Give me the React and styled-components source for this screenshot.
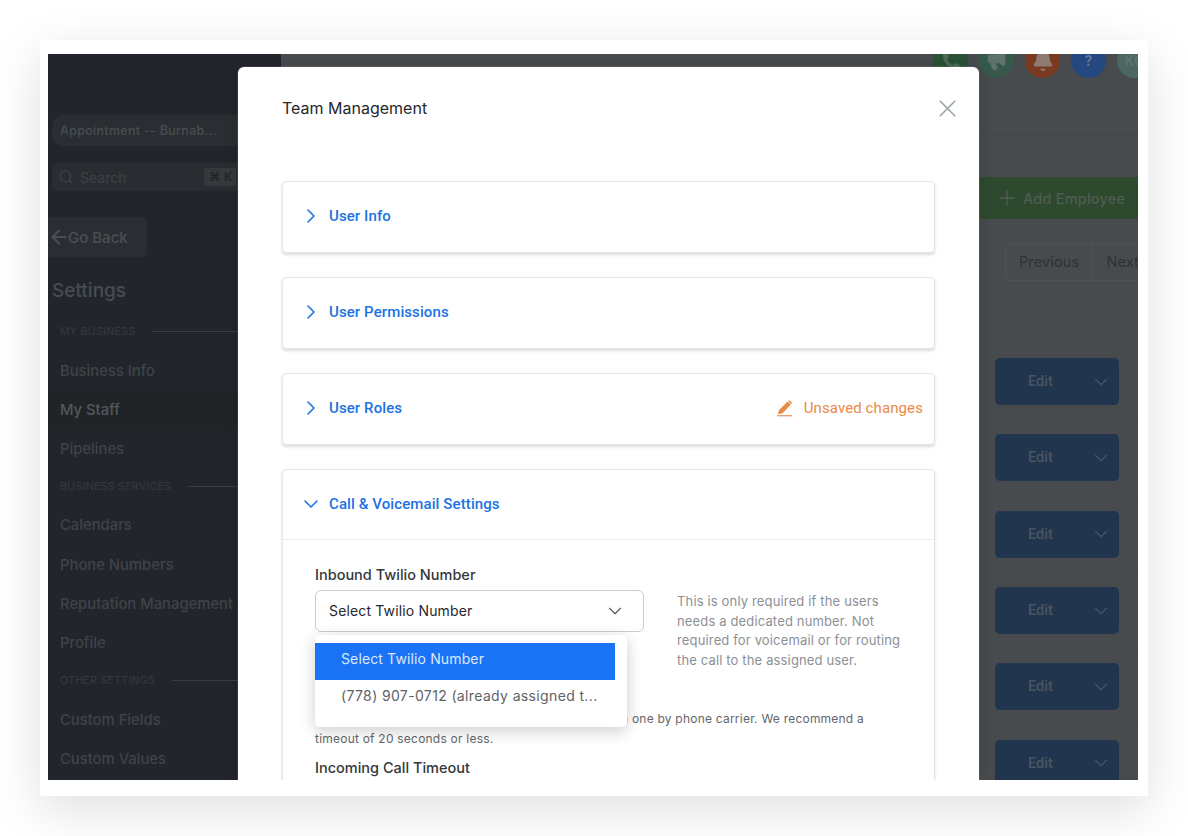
import React from "react";
import styled, { createGlobalStyle } from "styled-components";
import { ChevronRight, ChevronDown, X, Plus, Phone, Megaphone, Bell, Search, ArrowLeft } from "lucide-react";

const Global = createGlobalStyle`
  html, body { margin: 0; padding: 0; background: #fff; }
  body { font-family: Inter, "Liberation Sans", sans-serif; width: 1188px; height: 836px; overflow: hidden; }
  * { box-sizing: border-box; }
`;

const Page = styled.div`
  width: 1188px;
  height: 836px;
  padding: 40px;
`;
const Frame = styled.div`
  width: 1108px;
  height: 756px;
  background: #fff;
  padding: 14px 10px 16px 8px;
  box-shadow: 0 14px 48px rgba(0, 0, 0, 0.13);
`;
const Screen = styled.div`
  position: relative;
  display: flex;
  width: 1090px;
  height: 726px;
  overflow: hidden;
  background: #474b4d;
`;
const Sidebar = styled.aside`
  width: 233px;
  flex: none;
  background: #22262c;
  padding-top: 61px;
  display: flex;
  flex-direction: column;
  color: #43474c;
`;
const Location = styled.div`
  margin-left: 4px;
  height: 31px;
  border-radius: 12px;
  background: #2a2e33;
  padding-left: 8px;
  font-size: 12.5px;
  letter-spacing: 0.3px;
  font-weight: 500;
  line-height: 32px;
  white-space: nowrap;
  color: #494d52;
`;
const SearchBox = styled.div`
  margin: 17px 0 0 4px;
  height: 28px;
  border-radius: 5px;
  background: #292d32;
  display: flex;
  align-items: center;
  padding-left: 6px;
  font-size: 14px;
  color: #3d4146;
  gap: 6px;
`;
const Kbd = styled.span`
  margin-left: 72px;
  width: 32px;
  height: 18px;
  background: #35393d;
  border-radius: 2px;
  font-size: 12px;
  line-height: 18px;
  text-align: center;
  color: #1c1f23;
`;
const BackButton = styled.div`
  margin-top: 26px;
  width: 99px;
  height: 40px;
  border-radius: 0 6px 6px 0;
  background: #2a2e33;
  display: flex;
  align-items: center;
  font-size: 15px;
  font-weight: 500;
  color: #4a4e53;
  svg { margin-right: -2px; }
`;
const SideTitle = styled.div`
  margin: 21px 0 0 4px;
  height: 26px;
  font-size: 19px;
  line-height: 26px;
  font-weight: 500;
  color: #484c51;
`;
const Section = styled.div`
  display: flex;
  align-items: center;
  gap: 17px;
  height: 20px;
  padding-left: 12px;
  font-size: 10.5px;
  letter-spacing: 0.35px;
  color: #353a3f;
  white-space: nowrap;
  margin-top: ${(p) => p.$mt}px;
  &::after { content: ""; flex: 1; height: 1px; background: #3a3e44; }
`;
const NavItem = styled.div`
  height: 39.3px;
  line-height: 39.3px;
  padding-left: 12px;
  font-size: 14.8px;
  font-weight: 500;
  white-space: nowrap;
  margin-top: ${(p) => p.$mt || 0}px;
  color: ${(p) => (p.$active ? "#54585b" : "#3f4348")};
  background: ${(p) => (p.$active ? "#202427" : "transparent")};
`;
const Main = styled.main`
  flex: 1;
  min-width: 0;
  display: flex;
  flex-direction: column;
`;
const TopBar = styled.div`
  height: 82px;
  flex: none;
  border-bottom: 1px solid #434749;
  display: flex;
  justify-content: flex-end;
  gap: 11px;
  margin-right: -14px;
`;
const Avatar = styled.div`
  width: 35px;
  height: 35px;
  margin-top: -11px;
  border-radius: 50%;
  flex: none;
  background: ${(p) => p.$bg};
  color: ${(p) => p.$fg};
  display: flex;
  align-items: center;
  justify-content: center;
  font-size: 14px;
  font-weight: ${(p) => p.$weight || 700};
  overflow: hidden;
`;
const AddButton = styled.div`
  align-self: flex-end;
  margin-top: 41px;
  width: 300px;
  height: 42px;
  flex: none;
  background: #2d4a2f;
  color: #4f5c52;
  display: flex;
  align-items: center;
  padding-left: 157px;
  gap: 4px;
  font-size: 14.5px;
  font-weight: 500;
  letter-spacing: 0.2px;
  white-space: nowrap;
`;
const Pager = styled.div`
  align-self: flex-end;
  margin: 24px -15px 0 0;
  height: 38px;
  display: flex;
  border: 1px solid #4e5254;
  border-radius: 4px;
  font-size: 14.5px;
  color: #2f3234;
`;
const PagerItem = styled.div`
  padding: 0 13px;
  line-height: 36px;
  letter-spacing: 0.15px;
  & + & { border-left: 1px solid #4e5254; }
`;
const Rows = styled.div`
  margin-top: 63px;
`;
const Row = styled.div`
  height: 76.33px;
  border-bottom: 1px solid #44484a;
  display: flex;
  align-items: center;
  justify-content: flex-end;
  padding-right: 19px;
`;
const EditButton = styled.div`
  width: 124px;
  height: 47px;
  border-radius: 5px;
  background: #22354f;
  color: #4a5562;
  display: flex;
  align-items: center;
  padding-left: 33px;
  font-family: Roboto, sans-serif;
  font-size: 14.5px;
  font-weight: 500;
  svg { margin-left: auto; margin-right: 7px; }
`;
const Modal = styled.section`
  position: absolute;
  left: 190px;
  top: 13px;
  bottom: 0;
  width: 741px;
  background: #fff;
  border-radius: 6px 6px 0 0;
  box-shadow: 0 0 0 1px rgba(255, 255, 255, 0.1), 0 0 14px rgba(0, 0, 0, 0.14);
  padding: 0 44px;
  overflow: hidden;
`;
const ModalHead = styled.header`
  height: 114px;
  display: flex;
  justify-content: space-between;
  padding-top: 30px;
`;
const ModalTitle = styled.h2`
  margin: 0;
  height: 22px;
  font-size: 16px;
  line-height: 22px;
  font-weight: 400;
  color: #26282b;
`;
const CloseButton = styled.div`
  margin-right: -27px;
  color: #9ba3a8;
  height: 22px;
  display: flex;
  align-items: center;
`;
const Card = styled.div`
  width: 653px;
  border: 1px solid #e4e5e7;
  border-radius: 4px;
  background: #fff;
  box-shadow: 0 2px 3px rgba(0, 0, 0, 0.14);
  margin-bottom: 24px;
`;
const CardHeader = styled.div`
  height: 70px;
  display: flex;
  align-items: center;
  padding: 0 11px 2px 16px;
  color: #1b73e2;
  gap: 6px;
  border-bottom: ${(p) => (p.$open ? "1px solid #eeeff1" : "none")};
`;
const CardTitle = styled.div`
  font-family: Roboto, sans-serif;
  font-size: 15px;
  letter-spacing: 0.1px;
  font-weight: 500;
  flex: 1;
`;
const Unsaved = styled.div`
  display: flex;
  align-items: center;
  gap: 11px;
  font-family: Roboto, sans-serif;
  font-size: 15px;
  letter-spacing: 0.1px;
  color: #ea8a47;
`;
const CardBody = styled.div`
  padding: 25px 32px 60px 32px;
  position: relative;
`;
const FieldRow = styled.div`
  display: flex;
  gap: 33px;
`;
const FieldLabel = styled.div`
  font-size: 14.5px;
  line-height: 20px;
  font-weight: 500;
  color: #33373b;
`;
const SelectBox = styled.div`
  margin-top: 5px;
  width: 329px;
  height: 42px;
  border: 1px solid #c9ccd2;
  border-radius: 6px;
  display: flex;
  align-items: center;
  justify-content: space-between;
  padding: 0 17px 0 13px;
  font-size: 14px;
  line-height: 38px;
  letter-spacing: 0.15px;
  color: #25282c;
  svg { color: #55595e; }
`;
const Help = styled.p`
  margin: 27px 0 0;
  width: 232px;
  font-size: 13px;
  line-height: 19.6px;
  letter-spacing: 0.15px;
  color: #8c9096;
`;
const Dropdown = styled.div`
  position: absolute;
  left: 32px;
  top: 95px;
  width: 312px;
  height: 92px;
  background: #fff;
  border-radius: 5px;
  padding-top: 8px;
  box-shadow: 0 4px 16px rgba(0, 0, 0, 0.2);
  z-index: 2;
`;
const Option = styled.div`
  width: 300px;
  height: 37px;
  line-height: 32px;
  padding-left: 26px;
  font-size: 14px;
  white-space: nowrap;
  letter-spacing: 0.13px;
  background: ${(p) => (p.$selected ? "#1a73f5" : "transparent")};
  color: ${(p) => (p.$selected ? "#dbe9fd" : "#5f6368")};
  &:last-child { line-height: 31px; letter-spacing: 0.36px; }
`;
const Note = styled.p`
  margin: 39px 0 0;
  font-size: 12px;
  line-height: 20px;
  color: #63676c;
  letter-spacing: 0.22px;
`;
const NoteLine = styled.span`
  display: block;
  width: 549px;
  text-align: right;
  white-space: nowrap;
`;
const TimeoutLabel = styled(FieldLabel)`
  margin-top: 9px;
`;

const Pencil = () => (
  <svg width="17" height="17" viewBox="0 0 17 17" fill="#ea8a47" aria-hidden="true">
    <path d="M11.6 1.6 14.9 4.6 6.6 13.3 2 14.3 3.1 9.9Z" />
    <path d="M12.5.8c.5-.5 1.2-.5 1.7 0l1.3 1.2c.5.5.5 1.2 0 1.7l-.3.3L12.2 1Z" />
    <rect x="1" y="15.2" width="15" height="1.1" />
  </svg>
);

const section1 = ["Business Info", "My Staff", "Pipelines"];
const section2 = ["Calendars", "Phone Numbers", "Reputation Management", "Profile"];
const section3 = ["Custom Fields", "Custom Values"];

export default function App() {
  return (
    <Page>
      <Global />
      <Frame>
        <Screen>
          <Sidebar>
            <Location>Appointment -- Burnab...</Location>
            <SearchBox>
              <Search size={16} strokeWidth={2} />
              Search
              <Kbd>⌘ K</Kbd>
            </SearchBox>
            <BackButton>
              <ArrowLeft size={22} strokeWidth={2.4} />
              Go Back
            </BackButton>
            <SideTitle>Settings</SideTitle>
            <Section $mt={17}>MY BUSINESS</Section>
            <NavItem $mt={10.5}>{section1[0]}</NavItem>
            <NavItem $active>{section1[1]}</NavItem>
            <NavItem>{section1[2]}</NavItem>
            <Section $mt={7.5}>BUSINESS SERVICES</Section>
            <NavItem $mt={9.5}>{section2[0]}</NavItem>
            {section2.slice(1).map((n) => (
              <NavItem key={n}>{n}</NavItem>
            ))}
            <Section $mt={7}>OTHER SETTINGS</Section>
            <NavItem $mt={10}>{section3[0]}</NavItem>
            <NavItem>{section3[1]}</NavItem>
          </Sidebar>
          <Main>
            <TopBar>
              <Avatar $bg="#2a5237" $fg="#4f6a58"><Phone size={20} fill="currentColor" strokeWidth={0} /></Avatar>
              <Avatar $bg="#36594c" $fg="#5d736b"><Megaphone size={21} fill="currentColor" /></Avatar>
              <Avatar $bg="#7a3a22" $fg="#8e7b72"><Bell size={22} fill="currentColor" /></Avatar>
              <Avatar $bg="#24487f" $fg="#62748e">?</Avatar>
              <Avatar $bg="#4c6661" $fg="#5f7570" $weight={500}>KC</Avatar>
            </TopBar>
            <AddButton>
              <Plus size={24} strokeWidth={1.4} />
              Add Employee
            </AddButton>
            <Pager>
              <PagerItem>Previous</PagerItem>
              <PagerItem>Next</PagerItem>
            </Pager>
            <Rows>
              {[0, 1, 2, 3, 4, 5].map((i) => (
                <Row key={i}>
                  <EditButton>
                    Edit
                    <ChevronDown size={22} strokeWidth={1.2} />
                  </EditButton>
                </Row>
              ))}
            </Rows>
          </Main>
          <Modal>
            <ModalHead>
              <ModalTitle>Team Management</ModalTitle>
              <CloseButton><X size={29} strokeWidth={1.3} /></CloseButton>
            </ModalHead>
            <Card>
              <CardHeader><ChevronRight size={24} strokeWidth={1.6} /><CardTitle>User Info</CardTitle></CardHeader>
            </Card>
            <Card>
              <CardHeader><ChevronRight size={24} strokeWidth={1.6} /><CardTitle>User Permissions</CardTitle></CardHeader>
            </Card>
            <Card>
              <CardHeader>
                <ChevronRight size={24} strokeWidth={1.6} />
                <CardTitle>User Roles</CardTitle>
                <Unsaved><Pencil />Unsaved changes</Unsaved>
              </CardHeader>
            </Card>
            <Card>
              <CardHeader $open><ChevronDown size={24} strokeWidth={1.6} /><CardTitle>Call &amp; Voicemail Settings</CardTitle></CardHeader>
              <CardBody>
                <FieldRow>
                  <div>
                    <FieldLabel>Inbound Twilio Number</FieldLabel>
                    <SelectBox>
                      Select Twilio Number
                      <ChevronDown size={22} strokeWidth={1.2} />
                    </SelectBox>
                  </div>
                  <Help>This is only required if the users needs a dedicated number. Not required for voicemail or for routing the call to the assigned user.</Help>
                </FieldRow>
                <Dropdown>
                  <Option $selected>Select Twilio Number</Option>
                  <Option>(778) 907-0712 (already assigned t...</Option>
                </Dropdown>
                <Note>
                  <NoteLine>Call timeout settings may vary in length from one by phone carrier. We recommend a</NoteLine>
                  timeout of 20 seconds or less.
                </Note>
                <TimeoutLabel>Incoming Call Timeout</TimeoutLabel>
              </CardBody>
            </Card>
          </Modal>
        </Screen>
      </Frame>
    </Page>
  );
}
